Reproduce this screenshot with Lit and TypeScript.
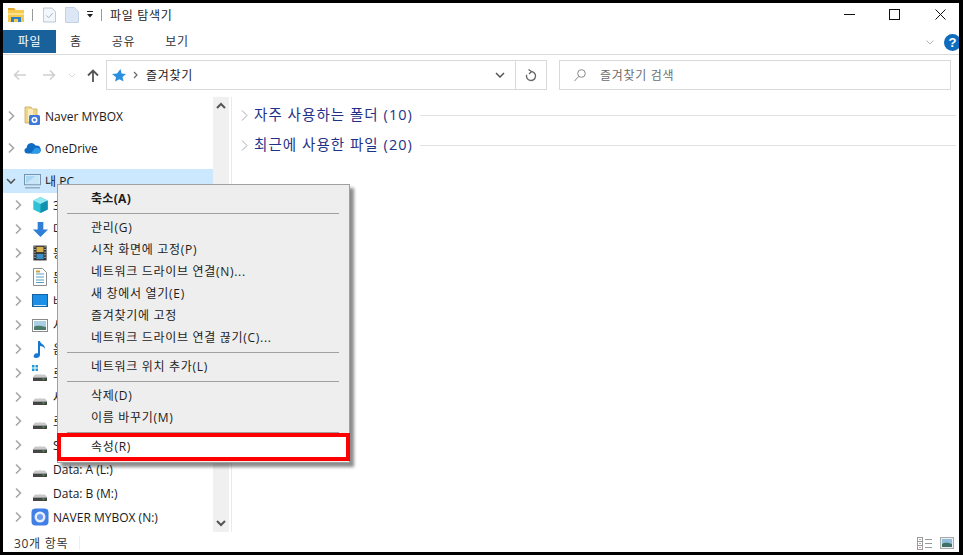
import { LitElement, html, css, svg } from "lit";
import { customElement } from "lit/decorators.js";

const chev = (open = false) => html`<svg class="chev" width="16" height="16" viewBox="0 0 16 16" fill="none" stroke=${open ? "#555" : "#a6a6a6"} stroke-width="1.6">${open
  ? svg`<path d="M4 6l4 4 4-4"/>`
  : svg`<path d="M6 3.5l4.5 4.5-4.5 4.5"/>`}</svg>`;

const drive = (win = false) => html`<svg width="16" height="18" viewBox="0 0 16 18">
  ${win ? svg`<rect x="0" y="1" width="2.500" height="2.500" fill="#1d9bd8"/><rect x="3.500" y="1" width="2.500" height="2.500" fill="#1d9bd8"/><rect x="0" y="4.500" width="2.500" height="2.500" fill="#1d9bd8"/><rect x="3.500" y="4.500" width="2.500" height="2.500" fill="#1d9bd8"/>` : ""}
  <path d="M3 10.500h10l2 2.500H1z" fill="#c9c9c9"/><rect x="1" y="13" width="14" height="4" fill="#454545"/><rect x="1" y="13" width="14" height="1" fill="#9a9a9a"/><rect x="10.500" y="14.500" width="2" height="1" fill="#35d04a"/></svg>`;

const icons: Record<string, unknown> = {
  box: html`<svg width="18" height="20" viewBox="0 0 18 20"><path d="M2 1h6l1.500 2H14v14H2z" fill="#f0d68a" stroke="#c9ab62" stroke-width=".8"/><path d="M5 3h5v12H5z" fill="#fbeebc"/><rect x="6" y="9" width="11" height="10" rx="1.500" fill="#3b78e0"/><circle cx="11.500" cy="14" r="3" fill="#fff"/><circle cx="11.500" cy="14" r="1.400" fill="#3b78e0"/></svg>`,
  cloud: html`<svg width="17" height="12" viewBox="0 0 20 14"><path d="M4 13.500a3.500 3.500 0 0 1-.8-6.900A5.500 5.500 0 0 1 13.600 4.200 4.500 4.500 0 0 1 16 13.500z" fill="#0f6cc4"/><path d="M8 13.500l4.500-6c2-1.500 7-.5 7 3 0 1.800-1.200 3-3 3z" fill="#2b9be8"/></svg>`,
  pc: html`<svg width="17" height="15" viewBox="0 0 18 16"><rect x=".5" y=".5" width="17" height="11" fill="#d7ecfa" stroke="#6f8fa8"/><path d="M2 2h14v8H2z" fill="#a8d6f3"/><path d="M2 10L12 2h4v8z" fill="#c9e6f8"/><rect x="1" y="14" width="16" height="1.400" fill="#8ea3b4"/></svg>`,
  cube: html`<svg width="17" height="18" viewBox="0 0 18 20"><path d="M9 1l8 4v10l-8 4-8-4V5z" fill="#2ec2d6"/><path d="M9 1l8 4-8 4-8-4z" fill="#8fe7ef"/><path d="M9 9v10l8-4V5z" fill="#108fb0"/></svg>`,
  down: html`<svg width="17" height="17" viewBox="0 0 18 18"><path d="M6 1h6v8h5l-8 8-8-8h5z" fill="#2f7fd6"/></svg>`,
  film: html`<svg width="14" height="16" viewBox="0 0 16 18"><rect x=".5" y=".5" width="15" height="17" fill="#333"/><rect x="4" y="2" width="8" height="6" fill="#d8b24a"/><rect x="4" y="10" width="8" height="6" fill="#3b8fc9"/><path d="M1.500 2h1.500M1.500 5h1.500M1.500 8h1.500M1.500 11h1.500M1.500 14h1.500M13 2h1.500M13 5h1.500M13 8h1.500M13 11h1.500M13 14h1.500" stroke="#eee"/></svg>`,
  doc: html`<svg width="14" height="18" viewBox="0 0 14 18"><path d="M.5.500h9l4 4v13H.5z" fill="#fff" stroke="#8c8c8c"/><path d="M3 6h8M3 9h8M3 12h8M3 14.500h8" stroke="#5a9fc0"/><path d="M3 3.500h4" stroke="#d6a13a" stroke-width="2"/></svg>`,
  desk: html`<svg width="16" height="14" viewBox="0 0 16 14"><rect x=".5" y=".5" width="15" height="12" fill="#1b8fe6" stroke="#12639f"/><rect x="2" y="11" width="12" height="1" fill="#cfe8fb"/></svg>`,
  pic: html`<svg width="16" height="13" viewBox="0 0 16 13"><rect x=".5" y=".5" width="15" height="12" fill="#fff" stroke="#8a8a8a"/><rect x="2" y="2" width="12" height="9" fill="#a9cfe4"/><path d="M2 8c3-2 6-1 12 0v3H2z" fill="#4c7a6a"/></svg>`,
  music: html`<svg width="14" height="18" viewBox="0 0 14 18"><path d="M5 1h2c0 3 5 3 5 8-1-2-3-3-5-3v9c0 2-2 3-4 3s-3-1-2-3 3-2 4-1.500z" fill="#1778d2"/></svg>`,
  drive: drive(),
  win: drive(true),
  naver: html`<svg width="18" height="18" viewBox="0 0 18 18"><rect x=".5" y=".5" width="17" height="17" rx="4" fill="#3f7fe6"/><circle cx="9" cy="9" r="5.500" fill="#e6eefc"/><circle cx="9" cy="9" r="3" fill="#6a9bee"/></svg>`,
};

const tree = [
  { icon: "cube", label: "3D 개체" },
  { icon: "down", label: "다운로드" },
  { icon: "film", label: "동영상" },
  { icon: "doc", label: "문서" },
  { icon: "desk", label: "바탕 화면" },
  { icon: "pic", label: "사진" },
  { icon: "music", label: "음악" },
  { icon: "win", label: "로컬 디스크 (C:)" },
  { icon: "drive", label: "새 볼륨 (D:)" },
  { icon: "drive", label: "로컬 디스크 (E:)" },
  { icon: "drive", label: "SSD (F:)" },
  { icon: "drive", label: "Data: A (L:)" },
  { icon: "drive", label: "Data: B (M:)" },
  { icon: "naver", label: "NAVER MYBOX (N:)" },
];

type MenuItem = { t: string; b?: boolean; hl?: boolean } | null;
const menu: MenuItem[] = [
  { t: "축소(A)", b: true },
  null,
  { t: "관리(G)" },
  { t: "시작 화면에 고정(P)" },
  { t: "네트워크 드라이브 연결(N)..." },
  { t: "새 창에서 열기(E)" },
  { t: "즐겨찾기에 고정" },
  { t: "네트워크 드라이브 연결 끊기(C)..." },
  null,
  { t: "네트워크 위치 추가(L)" },
  null,
  { t: "삭제(D)" },
  { t: "이름 바꾸기(M)" },
  null,
  { t: "속성(R)", hl: true },
];

const secChev = html`<svg width="7" height="11" viewBox="0 0 7 11"><path d="M1 .500l5 5-5 5" fill="none" stroke="#a8a8a8"/></svg>`;

@customElement("app-root")
export class AppRoot extends LitElement {
  static styles = css`
    :host {
      display: block;
      width: 963px;
      height: 555px;
      font-family: "Open Sans", "Noto Sans CJK KR", sans-serif;
      font-size: 12px;
      color: #1a1a1a;
    }
    .win {
      position: relative;
      box-sizing: border-box;
      width: 963px;
      height: 555px;
      background: #fff;
      border: solid #000;
      border-width: 3px 4px 3px 3px;
      display: flex;
      flex-direction: column;
      overflow: hidden;
    }
    .ko { letter-spacing: 0.7px; }
    .title {
      height: 27px;
      box-sizing: border-box;
      display: flex;
      align-items: center;
      padding: 0 0 4px 5px;
      flex: none;
    }
    .qa { display: flex; align-items: center; }
    .vbar { width: 1px; height: 12px; background: #9a9a9a; }
    .title-text { margin-left: 8px; color: #222; }
    .wc { margin-left: auto; display: flex; align-items: center; }
    .wc svg { display: block; }
    .tabs {
      height: 24px;
      flex: none;
      display: flex;
      align-items: flex-start;
      border-bottom: 1px solid #dadada;
    }
    .tab { color: #333; height: 23px; line-height: 23px; margin-left: 30px; }
    .tab.home { margin-left: 14px; }
    .tab.file {
      width: 53px;
      margin-left: 0;
      background: #19619b;
      color: #fff;
      text-align: center;
    }
    .tabs .right { margin-left: auto; height: 24px; display: flex; align-items: center; gap: 10px; margin-right: -2px; }
    .help {
      width: 17px;
      height: 17px;
      border-radius: 50%;
      background: #0f6cbd;
      color: #fff;
      font: bold 13px/17px "Liberation Sans", sans-serif;
      text-align: center;
    }
    .nav {
      height: 42px;
      flex: none;
      display: flex;
      align-items: center;
      padding: 5px 8px 7px 10px;
      box-sizing: border-box;
    }
    .nav-btns { display: flex; align-items: center; width: 93px; flex: none; }
    .addr {
      width: 441px;
      height: 30px;
      box-sizing: border-box;
      border: 1px solid #d9d9d9;
      display: flex;
      align-items: center;
      flex: none;
    }
    .addr-main { flex: 1; display: flex; align-items: center; padding-left: 5px; gap: 7px; color: #222; }
    .addr-btn {
      width: 30px;
      height: 28px;
      border-left: 1px solid #d9d9d9;
      display: flex;
      align-items: center;
      justify-content: center;
      flex: none;
    }
    .search {
      margin-left: 12px;
      flex: 1;
      height: 30px;
      box-sizing: border-box;
      border: 1px solid #d9d9d9;
      display: flex;
      align-items: center;
      padding-left: 14px;
      gap: 14px;
      color: #6d6d6d;
    }
    .body { flex: 1; display: flex; min-height: 0; }
    .side { width: 210px; flex: none; padding-top: 3px; }
    .row {
      height: 24px;
      display: flex;
      align-items: center;
      white-space: nowrap;
      overflow: hidden;
    }
    .row.top { height: 32px; }
    .row.sel { background: #cce8ff; height: 24px; margin-top: 5px; }
    .row.child { padding-left: 7px; }
    .row .chev { flex: none; margin-right: 3px; }
    .row.child .chev { margin-right: 4px; }
    .ic { width: 20px; display: flex; justify-content: center; align-items: center; flex: none; margin-right: 3px; }
    .scroll {
      width: 16px;
      background: #f0f0f0;
      display: flex;
      flex-direction: column;
      justify-content: space-between;
      flex: none;
    }
    .scroll svg { display: block; margin: 5px 2px; }
    .split { width: 1px; margin-left: 2px; background: #eaeaea; flex: none; }
    .main { flex: 1; padding: 3px 0 0 9px; min-width: 0; }
    .sec {
      height: 30px;
      display: flex;
      align-items: center;
      color: #1e3287;
      font-size: 14.5px;
      letter-spacing: 1.05px;
      white-space: nowrap;
    }
    .sec svg { flex: none; margin-right: 6px; }
    .sec-t { margin-bottom: 3px; }
    .sec .line { flex: 1; height: 1px; background: #e2e2e2; margin: 0 3px 0 7px; }
    .status {
      height: 20px;
      box-sizing: border-box;
      padding: 2px 0 0 11px;
      flex: none;
      display: flex;
      align-items: center;
      color: #333;
    }
    .status .sep { width: 1px; height: 14px; background: #efefef; margin-left: 11px; }
    .views { margin-left: auto; display: flex; gap: 7px; margin-right: 5px; align-items: center; }
    .views svg { display: block; }
    .menu {
      position: absolute;
      left: 54px;
      top: 181px;
      width: 293px;
      box-sizing: border-box;
      background: #eeeeee;
      border: 1px solid #a0a0a0;
      box-shadow: 4px 4px 3px rgba(0, 0, 0, 0.45);
      padding: 3px 0 4px;
      color: #1c1c1c;
    }
    .mi { height: 22px; line-height: 22px; padding-left: 33px; white-space: nowrap; position: relative; letter-spacing: 0.7px; }
    .mi.b { font-weight: 700; letter-spacing: 0.3px; }
    .mi.hl { background: #fff; }
    .mi.hl::after {
      content: "";
      position: absolute;
      left: -1px;
      right: -1px;
      top: -3px;
      bottom: -3px;
      border: 4px solid #f00;
    }
    .ms { height: 7px; display: flex; align-items: center; padding: 0 10px 0 9px; }
    .ms i { flex: 1; height: 1px; background: #a0a0a0; }
  `;

  render() {
    return html`<div class="win">
      <div class="title">
        <div class="qa">
          <svg width="16" height="14" viewBox="0 0 16 14"><path d="M0 0h6l1.500 2H16v12H0z" fill="#f6c94f"/><path d="M0 0h6l1.500 2H0z" fill="#e0a92e"/><path d="M0 5h16v2H0z" fill="#fbe08a"/><path d="M3 14V9h10v5h-3v-3H6v3z" fill="#2f7fc8"/></svg>
          <span class="vbar" style="margin-left:8px"></span>
          <svg style="margin-left:10px" width="13" height="16" viewBox="0 0 14 16"><path d="M.5.500h9l4 4v11H.5z" fill="#f3f6fb" stroke="#b8c4d6"/><path d="M3.500 8.500l2.500 2.500 4.500-5" stroke="#9ab0cb" fill="none"/></svg>
          <svg style="margin-left:9px" width="14" height="16" viewBox="0 0 14 16"><path d="M.5.500h9l4 4v11H.5z" fill="#dce6f4" stroke="#c4d2e6"/></svg>
          <svg style="margin-left:7px" width="8" height="9" viewBox="0 0 8 9"><rect x="1" y="1" width="6" height="1" fill="#222"/><path d="M1 4h6L4 7.500z" fill="#222"/></svg>
          <span class="vbar" style="margin-left:7px"></span>
        </div>
        <span class="title-text ko">파일 탐색기</span>
        <div class="wc">
          <svg width="11" height="11" viewBox="0 0 11 11"><path d="M0 5.500h11" stroke="#111"/></svg>
          <svg style="margin-left:34px" width="11" height="11" viewBox="0 0 11 11"><rect x=".5" y=".5" width="10" height="10" fill="none" stroke="#111"/></svg>
          <svg style="margin-left:35px;margin-right:13px" width="11" height="11" viewBox="0 0 11 11"><path d="M.5.500l10 10M10.500.500l-10 10" stroke="#111"/></svg>
        </div>
      </div>
      <div class="tabs">
        <div class="tab file ko">파일</div>
        <div class="tab home ko">홈</div>
        <div class="tab ko">공유</div>
        <div class="tab ko">보기</div>
        <div class="right">
          <svg width="8" height="5" viewBox="0 0 8 5"><path d="M.5.500L4 4 7.500.500" fill="none" stroke="#b5b5b5"/></svg>
          <div class="help">?</div>
        </div>
      </div>
      <div class="nav">
        <div class="nav-btns">
          <svg width="14" height="12" viewBox="0 0 14 12"><path d="M13 6H2M6 1.500L1.500 6 6 10.500" fill="none" stroke="#cfcfcf" stroke-width="1.500"/></svg>
          <svg style="margin-left:15px" width="14" height="12" viewBox="0 0 14 12"><path d="M1 6h11M8 1.500L12.500 6 8 10.500" fill="none" stroke="#cfcfcf" stroke-width="1.500"/></svg>
          <svg style="margin-left:12px" width="8" height="5" viewBox="0 0 8 5"><path d="M1 1l3 3 3-3" fill="none" stroke="#d6d6d6"/></svg>
          <svg style="margin-left:11px" width="12" height="13" viewBox="0 0 12 13"><path d="M6 13V2M1 6.500L6 1.500l5 5" fill="none" stroke="#555" stroke-width="1.800"/></svg>
        </div>
        <div class="addr">
          <div class="addr-main">
            <svg width="14" height="13" viewBox="0 0 14 13"><path d="M8.500 0l1 4.500 4.500.500-3.500 3 1 4.500-4-2.300-4.500 2.300 1-4.200L0 5l5-.500z" fill="#2b8fe0"/></svg>
            <svg width="6" height="8" viewBox="0 0 6 8"><path d="M1 1l3 3-3 3" fill="none" stroke="#666" stroke-width="1.200"/></svg>
            <span class="ko">즐겨찾기</span>
          </div>
          <svg width="10" height="6" viewBox="0 0 10 6" style="margin-right:10px"><path d="M1 1l4 4 4-4" fill="none" stroke="#555" stroke-width="1.500"/></svg>
          <div class="addr-btn">
            <svg width="12" height="13" viewBox="0 0 12 13"><path d="M6 2.500a4.500 4.500 0 1 1-4.300 3.200M3.500.500l3 2-2.500 2.500" fill="none" stroke="#666" stroke-width="1.300"/></svg>
          </div>
        </div>
        <div class="search">
          <svg width="12" height="13" viewBox="0 0 12 13"><circle cx="7.500" cy="4.500" r="3.800" fill="none" stroke="#888"/><path d="M4.800 7.300L.5 12" stroke="#888"/></svg>
          <span class="ko">즐겨찾기 검색</span>
        </div>
      </div>
      <div class="body">
        <div class="side">
          <div class="row top">${chev()}<span class="ic">${icons.box}</span>Naver MYBOX</div>
          <div class="row top">${chev()}<span class="ic">${icons.cloud}</span>OneDrive</div>
          <div class="row top sel">${chev(true)}<span class="ic">${icons.pc}</span>내 PC</div>
          ${tree.map((r) => html`<div class="row child">${chev()}<span class="ic">${icons[r.icon]}</span>${r.label}</div>`)}
        </div>
        <div class="scroll">
          <svg width="12" height="8" viewBox="0 0 12 8"><path d="M2 6l4-4 4 4" fill="none" stroke="#555" stroke-width="2"/></svg>
          <svg width="12" height="8" viewBox="0 0 12 8"><path d="M2 2l4 4 4-4" fill="none" stroke="#555" stroke-width="2"/></svg>
        </div>
        <div class="split"></div>
        <div class="main">
          <div class="sec">${secChev}<span class="sec-t">자주 사용하는 폴더 (10)</span><span class="line"></span></div>
          <div class="sec">${secChev}<span class="sec-t">최근에 사용한 파일 (20)</span><span class="line"></span></div>
        </div>
      </div>
      <div class="status">
        <span class="ko">30개 항목</span><span class="sep"></span>
        <div class="views">
          <svg width="16" height="13" viewBox="0 0 16 13"><rect x=".5" y=".5" width="5" height="12" fill="none" stroke="#9a9a9a"/><path d="M.5 4.500h5M.5 8.500h5" stroke="#9a9a9a"/><rect x="2.500" y="2" width="1" height="1" fill="#555"/><rect x="2.500" y="6" width="1" height="1" fill="#555"/><rect x="2.500" y="10" width="1" height="1" fill="#c44"/><path d="M8 2.500h7M8 6.500h7M8 10.500h7" stroke="#9a9a9a"/></svg>
          <svg width="14" height="12" viewBox="0 0 14 12"><rect x=".5" y=".5" width="13" height="11" fill="#e8eef3" stroke="#a9a9a9"/><rect x="2" y="2" width="10" height="8" fill="#8fbcd8"/><path d="M2 7c3-2 6-1 10 0v3H2z" fill="#3f6f66"/></svg>
        </div>
      </div>
      <div class="menu">
        ${menu.map((m) =>
          m === null
            ? html`<div class="ms"><i></i></div>`
            : html`<div class="mi ${m.b ? "b" : ""} ${m.hl ? "hl" : ""}">${m.t}</div>`
        )}
      </div>
    </div>`;
  }
}
